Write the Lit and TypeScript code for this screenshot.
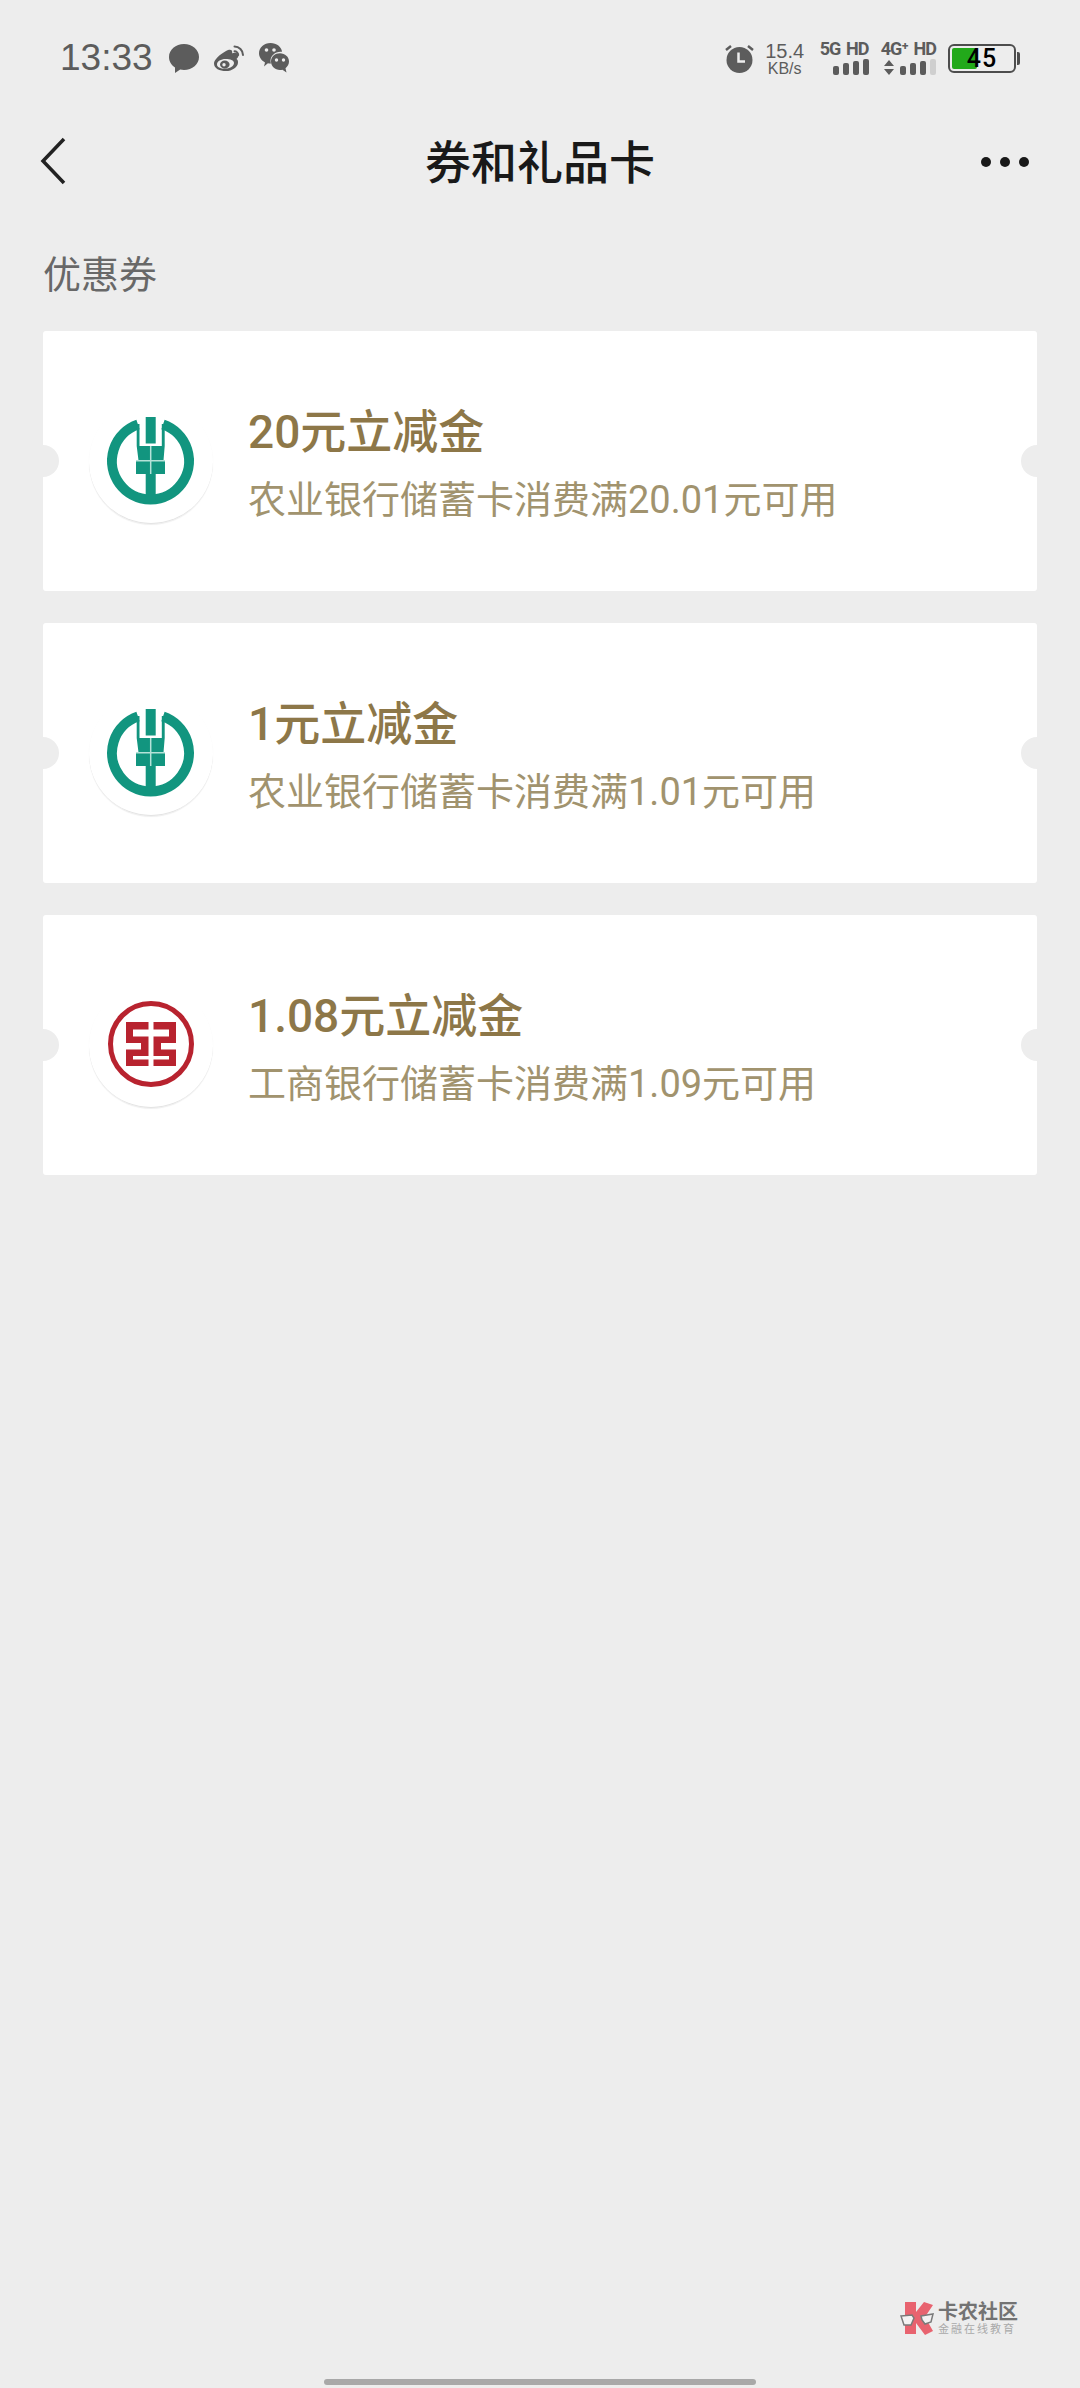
import { LitElement, html, css, svg } from 'lit';
import { customElement } from 'lit/decorators.js';

const abcLogo = svg`
  <svg viewBox="1 0 100 100" width="100" height="100">
    <path fill="none" stroke="#12957f" stroke-width="10" d="M38 14.500A38.500 38.500 0 1 0 63 14.500" />
    <rect x="45.700" y="7" width="10" height="26.500" fill="#12957f" />
    <path fill="#12957f" d="M36.700 14H39.500V36H61.800V14H64.700V36L63.500 50.500H65V64H55.700V90H45.700V64H36V50.500H38.500L36.700 36z" />
    <path stroke="#b5e2d8" stroke-width="1.500" fill="none" d="M36 50.800H65M50.700 36V64" />
  </svg>
`;

const icbcLogo = svg`
  <svg viewBox="1 2 100 100" width="100" height="100">
    <circle cx="51" cy="52" r="40.500" fill="none" stroke="#b8232f" stroke-width="5" />
    <path fill="#b8232f" d="M26 30H48.500V37.500H33V44.500H48.500V64H33V67.500H48.500V74H26V57.500H41V51H26z" />
    <path fill="#b8232f" d="M76 30H53.500V37.500H69V44.500H53.500V64H69V67.500H53.500V74H76V57.500H61V51H76z" />
  </svg>
`;

type Coupon = { title: string; desc: string; logo: unknown };

const coupons: Coupon[] = [
  { title: '20元立减金', desc: '农业银行储蓄卡消费满20.01元可用', logo: abcLogo },
  { title: '1元立减金', desc: '农业银行储蓄卡消费满1.01元可用', logo: abcLogo },
  { title: '1.08元立减金', desc: '工商银行储蓄卡消费满1.09元可用', logo: icbcLogo }
];

@customElement('app-root')
export class AppRoot extends LitElement {
  static styles = css`
    :host {
      display: block;
      position: relative;
      width: 1080px;
      height: 2388px;
      overflow: hidden;
      background: #ededed;
      font-family: Roboto, 'Noto Sans CJK SC', sans-serif;
    }

    .status {
      height: 116px;
      padding: 0 60px;
      display: flex;
      align-items: center;
      box-sizing: border-box;
      color: #5c5c5c;
    }

    .time {
      font-family: 'Liberation Sans', sans-serif;
      font-size: 37px;
      margin-right: 16px;
    }

    .app-icons {
      display: flex;
      gap: 15px;
      align-items: center;
    }

    .status-right {
      margin-left: auto;
      display: flex;
      align-items: center;
    }

    .speed {
      width: 40px;
      margin: 0 15px 0 11px;
      text-align: center;
      font-family: 'Liberation Sans', sans-serif;
      font-size: 16px;
      line-height: 15px;
    }

    .speed div:first-child {
      font-size: 20px;
      line-height: 20px;
    }

    .net {
      display: flex;
      flex-direction: column;
      align-items: flex-end;
      font-weight: 700;
      font-size: 18px;
      line-height: 16px;
      margin-right: 12px;
    }

    .net:last-of-type {
      margin-right: 10px;
    }

    .net-label {
      letter-spacing: -0.9px;
      word-spacing: 2px;
      white-space: nowrap;
      margin-bottom: 2px;
    }

    .bars {
      display: flex;
      align-items: flex-end;
      gap: 4px;
      height: 16px;
    }

    .bars i {
      display: block;
      width: 6px;
      border-radius: 2px;
      background: #5c5c5c;
    }

    .bars i.off {
      background: #cfcfcf;
    }

    .arrow-row {
      display: flex;
      align-items: flex-end;
    }

    .arrows {
      width: 10px;
      height: 15px;
      margin-right: 6px;
    }

    .battery {
      position: relative;
      width: 68px;
      height: 29px;
      box-sizing: border-box;
      border: 2px solid #4d4d4d;
      border-radius: 6px;
      margin-right: 1px;
      color: #000;
      display: flex;
      align-items: center;
      justify-content: center;
      font-size: 25px;
      font-weight: 500;
      letter-spacing: 1px;
    }

    .battery .level {
      position: absolute;
      left: 2px;
      top: 2px;
      bottom: 2px;
      width: 25px;
      background: #22a91a;
      border-radius: 2px;
    }

    .battery span {
      position: relative;
    }

    .battery-cap {
      width: 3px;
      height: 13px;
      background: #4d4d4d;
      border-radius: 0 2px 2px 0;
    }

    .nav {
      height: 94px;
      display: grid;
      grid-template-columns: 1fr auto 1fr;
      align-items: center;
      padding: 0 38px;
      color: #191919;
    }

    .back {
      margin-bottom: 5px;
    }

    .nav h1 {
      margin: 0;
      font-size: 46px;
      font-weight: 500;
      line-height: 1;
    }

    .more {
      justify-self: end;
      display: flex;
      gap: 9px;
      margin: 0 13px 2px 0;
    }

    .more i {
      width: 10px;
      height: 10px;
      border-radius: 50%;
      background: #191919;
    }

    .section {
      padding: 0 43px;
      margin-top: 40px;
      font-size: 38px;
      line-height: 50px;
      color: #686868;
    }

    .list {
      padding: 31px 43px 0;
      display: flex;
      flex-direction: column;
      gap: 32px;
    }

    .card {
      position: relative;
      height: 260px;
      background: #fff;
      border-radius: 3px;
      display: flex;
      align-items: center;
      padding-left: 46px;
      overflow: hidden;
    }

    .notch {
      position: absolute;
      top: 114px;
      width: 32px;
      height: 32px;
      border-radius: 50%;
      background: #ededed;
    }

    .notch.l {
      left: -16px;
    }

    .notch.r {
      right: -16px;
    }

    .logo {
      width: 124px;
      height: 124px;
      flex: none;
      box-sizing: border-box;
      border-radius: 50%;
      border-bottom: 1px solid #e4e4e4;
      box-shadow: 0 1px 1px #efefef;
      margin-top: 2px;
      padding-bottom: 3px;
      display: flex;
      align-items: center;
      justify-content: center;
    }

    .info {
      margin-left: 35px;
      padding-top: 5px;
    }

    .title {
      font-size: 46px;
      font-weight: 500;
      line-height: 60px;
      color: #8d7748;
    }

    .desc {
      margin-top: 13px;
      font-size: 38px;
      line-height: 50px;
      color: #a1936e;
    }

    .watermark {
      position: absolute;
      left: 900px;
      top: 2301px;
      display: flex;
      align-items: flex-start;
      gap: 4px;
    }

    .wm-text {
      color: #737373;
    }

    .wm-name {
      font-size: 20px;
      line-height: 22px;
      font-weight: 700;
    }

    .wm-sub {
      font-size: 11px;
      line-height: 13px;
      letter-spacing: 2px;
      color: #a9a9a9;
    }

    .home {
      position: absolute;
      left: 324px;
      top: 2379px;
      width: 432px;
      height: 6px;
      border-radius: 3px;
      background: #a8a8a8;
    }
  `;

  private bars(levels: number[], offFrom = 99) {
    return html`<div class="bars">
      ${levels.map((h, i) => html`<i class=${i >= offFrom ? 'off' : ''} style="height:${h}px"></i>`)}
    </div>`;
  }

  render() {
    return html`
      <div class="status">
        <span class="time">13:33</span>
        <div class="app-icons">
          <svg width="30" height="29" viewBox="0 0 30 29">
            <path fill="#5c5c5c" d="M15 0c8.300 0 15 5.700 15 13s-6.700 13-15 13c-1.300 0-2.600-.1-3.800-.4L6 29v-5.500C2.300 21.200 0 17.300 0 13 0 5.700 6.700 0 15 0z" />
          </svg>
          <svg width="30" height="26" viewBox="0 0 30 26">
            <path fill="#5c5c5c" fill-rule="evenodd" d="M12 6c3-1.800 6.200-2 6.200 1 0 1-.3 1.600 1 1.100 2.800-1 5.200 0 5.200 2.700 0 1.300-1 2.500-1.900 3.200 1 .4 1.500 1.500 1.500 3.400C24 22 18 26 12 26 5.500 26 0 23.500 0 18.500 0 15 5.500 9.500 12 6zm-.5 8C7 14 3 16.300 3 19.500c0 2.800 3.800 4.500 8.800 4.200 4.700-.3 8.200-2.800 8.200-5.700 0-2.700-3.600-4-8.500-4zm-.7 1.500a4.800 4 0 1 1 0 8 4.800 4 0 0 1 0-8zm-.8 2.600a1.700 1.700 0 1 0 0 3.400 1.700 1.700 0 0 0 0-3.400z" />
            <path fill="none" stroke="#5c5c5c" stroke-width="2" stroke-linecap="round" d="M20.500 1.500c4.500 0 8.500 4 8.500 8.500M20.500 6.300c2 0 3.700 1.700 3.700 3.700" />
          </svg>
          <svg width="30" height="30" viewBox="0 0 30 30">
            <path fill="#5c5c5c" d="M11.500 0C17.600 0 22.700 4 23 8.800c-.5-.1-1-.1-1.500-.1-5.500 0-10 4-10 9 0 1.100.2 2 .5 2.800h-.5c-.9 0-1.800-.1-2.600-.3L5 23.500l1-4.100C2.400 17.500 0 14.200 0 10.300 0 4.600 5.100 0 11.500 0z" />
            <path fill="#5c5c5c" d="M21 10.300c5 0 9 3.600 9 8.300 0 2.700-1.400 5.100-3.500 6.600l1 4.300-4.100-2.700c-.8.200-1.600.2-2.400.2-5 0-9-3.600-9-8.400s4-8.300 9-8.300z" />
            <g fill="#ededed"><circle cx="7.500" cy="7" r="1.800" /><circle cx="15" cy="7" r="1.800" /><circle cx="17.500" cy="17" r="1.700" /><circle cx="24.500" cy="17" r="1.700" /></g>
          </svg>
        </div>
        <div class="status-right">
          <svg width="29" height="29" viewBox="0 0 29 29">
            <circle cx="14.500" cy="16" r="13" fill="#5c5c5c" />
            <path fill="none" stroke="#ededed" stroke-width="2.500" d="M13.500 8.500V17.500H20" />
            <path stroke="#5c5c5c" stroke-width="2.500" d="M1 6l5-4M28 6l-5-4" />
          </svg>
          <div class="speed"><div>15.4</div><div>KB/s</div></div>
          <div class="net">
            <span class="net-label">5G HD</span>
            ${this.bars([9, 12, 14, 16])}
          </div>
          <div class="net">
            <span class="net-label">4G⁺ HD</span>
            <div class="arrow-row">
              <svg class="arrows" viewBox="0 0 10 15"><path fill="#5c5c5c" d="M5 0l5 6H0zM5 15L0 9h10z" /></svg>
              ${this.bars([9, 12, 14, 16], 3)}
            </div>
          </div>
          <div class="battery"><div class="level"></div><span>45</span></div>
          <div class="battery-cap"></div>
        </div>
      </div>

      <div class="nav">
        <svg class="back" width="28" height="48" viewBox="0 0 28 48">
          <path fill="none" stroke="#222" stroke-width="3.500" d="M26 2L5 24l21 22" />
        </svg>
        <h1>券和礼品卡</h1>
        <div class="more"><i></i><i></i><i></i></div>
      </div>

      <div class="section">优惠券</div>

      <div class="list">
        ${coupons.map(
          (c) => html`
            <div class="card">
              <div class="notch l"></div>
              <div class="notch r"></div>
              <div class="logo">${c.logo}</div>
              <div class="info">
                <div class="title">${c.title}</div>
                <div class="desc">${c.desc}</div>
              </div>
            </div>
          `
        )}
      </div>

      <div class="watermark">
        <svg width="34" height="34" viewBox="0 0 34 34">
          <path fill="#e8636f" d="M5 1h11v10L24 1l9 3-8 12 8 14-8 4-9-12v11H5z" />
          <path fill="#f4f2f2" stroke="#7a7a7a" stroke-width="1.500" d="M1 15l11-1 2 3-3 7-7 0zM21 15l12-2-2 8-6 2-3-4z" />
        </svg>
        <div class="wm-text">
          <div class="wm-name">卡农社区</div>
          <div class="wm-sub">金融在线教育</div>
        </div>
      </div>

      <div class="home"></div>
    `;
  }
}
